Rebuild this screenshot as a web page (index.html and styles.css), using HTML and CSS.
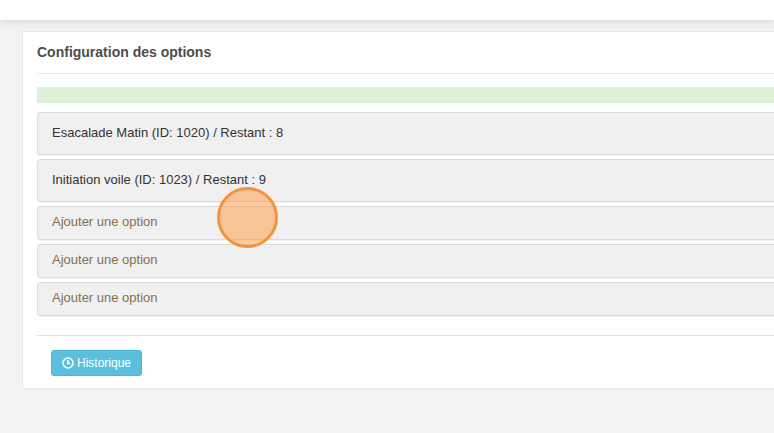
FILE: index.html
```html
<!DOCTYPE html>
<html lang="fr">
    <head>
        <meta charset="UTF-8">
        <meta name="viewport" content="width=device-width, initial-scale=1.0">
        <title>Configuration des options</title>
        <link rel="stylesheet" href="styles.css">
    </head>
    <body>
        <header class="topbar"></header>
        <main class="card">
            <h1 class="card-title">Configuration des options</h1>
            <div class="alert-success"></div>
            <div class="options">
                <div class="panel panel-option">Esacalade Matin (ID: 1020) / Restant : 8</div>
                <div class="panel panel-option">Initiation voile (ID: 1023) / Restant : 9</div>
                <div class="panel panel-add">
                    <a href="#">Ajouter une option</a>
                    <span class="click-marker"></span>
                </div>
                <div class="panel panel-add"><a href="#">Ajouter une option</a></div>
                <div class="panel panel-add"><a href="#">Ajouter une option</a></div>
            </div>
            <div class="card-footer">
                <button type="button" class="btn-info">
                    <svg class="icon" viewBox="0 0 12 12" aria-hidden="true">
                        <circle cx="6" cy="6" r="5"/>
                        <path d="M5.8 3V6.5H8.2"/>
                    </svg>
                    Historique
                </button>
            </div>
        </main>
    </body>
</html>
```

FILE: styles.css
```css
* {
    box-sizing: border-box;
}
body {
    background-color: #f2f2f2;
    color: #333333;
    font-family: "Liberation Sans", Arial, sans-serif;
    font-size: 13px;
    line-height: 18px;
    margin: 0;
}
.topbar {
    background-color: #ffffff;
    box-shadow: 0 1px 10px rgba(0, 0, 0, 0.12);
    height: 20px;
}
/* the card and its panels run off the right side of the window */
.card {
    background-color: #ffffff;
    border: 1px solid #e9e9e9;
    border-right: 0;
    margin: 11px 0 0 22px;
    padding: 10px 0 12px 14px;
}
.card-title {
    border-bottom: 1px solid #e8e8e8;
    color: #4d4d4d;
    font-size: 14px;
    font-weight: bold;
    line-height: 20px;
    margin: 0 0 13px;
    padding-bottom: 11px;
}
.alert-success {
    background-color: #dff0d8;
    height: 16px;
    margin-bottom: 9px;
}
.options {
    display: flex;
    flex-direction: column;
    gap: 4px;
}
.panel {
    background-color: #f0f0f0;
    border: 1px solid #dcdcdc;
    border-radius: 4px 0 0 4px;
    border-right: 0;
    box-shadow: 0 1px 1px rgba(0, 0, 0, 0.05);
    padding: 0 14px;
    position: relative;
}
.panel-option {
    padding-bottom: 12px;
    padding-top: 11px;
}
.panel-add {
    padding-bottom: 8px;
    padding-top: 6px;
}
.panel-add a {
    color: #8a6d4b;
    text-decoration: none;
}
.click-marker {
    background-color: rgba(255, 150, 60, 0.5);
    border: 3px solid #f09443;
    border-radius: 50%;
    height: 61px;
    left: 179px;
    pointer-events: none;
    position: absolute;
    top: -20px;
    width: 61px;
    z-index: 1;
}
.card-footer {
    border-top: 1px solid #e2e2e2;
    margin-top: 19px;
    padding: 14px 14px 0;
}
.btn-info {
    align-items: center;
    background-color: #5bc0de;
    border: 1px solid #46b8da;
    border-radius: 3px;
    color: #ffffff;
    cursor: pointer;
    display: flex;
    font-family: inherit;
    font-size: 12px;
    gap: 3px;
    line-height: 18px;
    padding: 3px 10px;
}
.icon {
    fill: none;
    height: 12px;
    stroke: #ffffff;
    stroke-width: 1.6;
    width: 12px;
}
```
